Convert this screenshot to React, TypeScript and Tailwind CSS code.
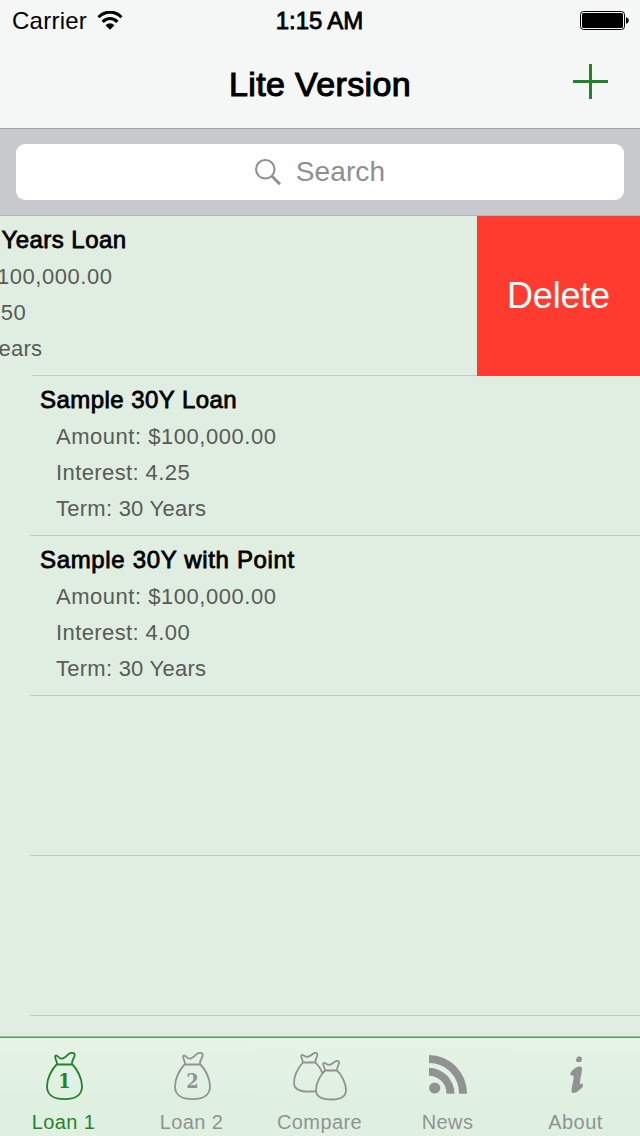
interface Loan {
  title: string;
  amount: string;
  interest: string;
  term: string;
}

const swipedLoan: Loan = {
  title: "Sample 15 Years Loan",
  amount: "$100,000.00",
  interest: "3.50",
  term: "15 Years",
};

const loans: Loan[] = [
  { title: "Sample 30Y Loan", amount: "$100,000.00", interest: "4.25", term: "30 Years" },
  { title: "Sample 30Y with Point", amount: "$100,000.00", interest: "4.00", term: "30 Years" },
];

const BAG = "M10.6 12.5 C6 17 1 26 1 34.5 C1 43 8 47.2 18.5 47.2 C29 47.2 36 43 36 34.5 C36 26 31 17 26.4 12.5 M10.8 12.5 H26.2 M11 12.5 C11.5 9.5 9 8 9.2 4.5 C9.4 2.5 11.5 3.8 12.5 5 C15.5 8.5 19.5 5.5 22.5 2.2 C24.5 0.3 28.8 0.3 28.7 3 C28.6 6 25.5 8 26 12.5";

function BagIcon({ label }: { label: string }) {
  return (
    <svg width="37" height="49" viewBox="0 0 37 49" fill="none" stroke="currentColor" strokeWidth="1.8">
      <path d={BAG} />
      <text
        x="18.5"
        y="36.3"
        textAnchor="middle"
        textLength="12.4"
        lengthAdjust="spacingAndGlyphs"
        fill="currentColor"
        stroke="none"
        className="font-['DejaVu_Serif'] text-[21px] font-bold"
      >
        {label}
      </text>
    </svg>
  );
}

function BagsIcon() {
  return (
    <svg width="54" height="49" viewBox="0 0 54 49" fill="none" stroke="currentColor" strokeWidth="1.8">
      <path d="M9.8 10.5 C6 15 1 22 1 31 C1 38 9 40 17 39.5 L23 39.3 M9.8 10.5 H22.5 M9.8 10.5 C10 8 8 6 8.3 4 C8.5 2 10.5 3.2 11.5 4 C14.5 6.5 17.5 4 20 1.8 C22 .3 24.8 .5 24.4 3 C24 6 22 7 22.6 10.5 C25 13 28 17 30 22" />
      <path d="M32 18.5 C28 22 23 31 23 38 C23 45 30 47.5 38.5 47.5 C46.5 47.5 53 45 53 38 C53 31 48 22 44 18.5 M32 18.5 H44.3 M32 18.5 C32.2 16 30 14 30.2 12 C30.4 10 32.5 11.2 33.5 12 C36.5 14.5 39 12 41.5 10 C43.5 8.5 46.4 8.5 46 11 C45.5 14 43.5 15.5 44 18.5" />
    </svg>
  );
}

function NewsIcon() {
  return (
    <svg className="-mt-[3px]" width="38" height="39" viewBox="0 0 38 39" fill="currentColor">
      <circle cx="5.7" cy="33" r="5.6" />
      <path d="M0 12.8 A26 26 0 0 1 25.5 38.8 H17.5 A17.5 17.5 0 0 0 0 20.8 Z" />
      <path d="M0 0 A38.5 38.5 0 0 1 38 38.8 H30 A30 30 0 0 0 0 8 Z" />
    </svg>
  );
}

function AboutIcon() {
  return (
    <svg className="-mt-[2px] ml-[2px]" width="14" height="38" viewBox="0 0 14 38" fill="currentColor">
      <path d="M7 1.2 L9 0.2 L11.3 1 L12 3.8 L11 6 H6.5 L6 3.5 Z" />
      <path d="M0.3 18.6 C0 16 3.5 13.2 6 11.5 C8.5 10 12 10 12 12.5 C12 16 10.5 21 9.8 27.8 C11 28.5 11.5 27 12.5 27.8 C13.5 30.5 12.5 32.3 10 33.3 C8 35.5 6 37 3.3 37 C1.5 37 1.2 35.5 1.6 33 C2.3 28 3.8 24 3.6 20 C2.6 19 1.3 20.3 .3 18.6 Z" />
    </svg>
  );
}

function StatusBar() {
  return (
    <div className="grid h-10 grid-cols-3 items-center pl-3 pr-[11px] text-[24px] leading-10">
      <div className="flex items-center gap-[10px]">
        <span className="pt-px tracking-[0.25px]">Carrier</span>
        <svg width="26" height="19" viewBox="0 0 26 19" fill="none" stroke="#000" strokeWidth="3.1">
          <path d="M1.5 6.2 C8 -.6 18 -.6 24.5 6.2" />
          <path d="M5.6 10.8 C10 6.4 16 6.4 20.4 10.8" />
          <path d="M8.5 14.3 C11.5 11.4 14.5 11.4 17.5 14.3 L13 18.7 Z" fill="#000" stroke="none" />
        </svg>
      </div>
      <span className="pt-px pr-[2px] text-center tracking-[-0.1px] [-webkit-text-stroke:0.8px_#000]">
        1:15 AM
      </span>
      <svg className="justify-self-end" width="49" height="19" viewBox="0 0 49 19">
        <rect x="0.5" y="0.5" width="44" height="18" rx="3" fill="none" stroke="#000" />
        <rect x="2" y="2" width="41" height="15" rx="1.5" />
        <path d="M46 6.2 C49.7 6.8 49.7 12.2 46 12.8 Z" />
      </svg>
    </div>
  );
}

function LoanDetails({ loan }: { loan: Loan }) {
  return (
    <div className="pl-10 pt-[6px] whitespace-nowrap">
      <h2
        className={`h-[37px] text-[24px] leading-9 text-black [-webkit-text-stroke:0.8px_#000] ${
          loan.title.endsWith("Point") ? "tracking-[0.66px]" : "tracking-[0.45px]"
        }`}
      >
        {loan.title}
      </h2>
      <div className="pl-4 text-[22px] leading-9 text-[#585b58]">
        <p className="tracking-[0.53px]">Amount: {loan.amount}</p>
        <p className="tracking-[0.4px]">Interest: {loan.interest}</p>
        <p className="tracking-[0.25px]">Term: {loan.term}</p>
      </div>
    </div>
  );
}

function Separator() {
  return <div className="mt-auto ml-[30px] h-px shrink-0 bg-[#bfcac1]" />;
}

const tabs = [
  { name: "Loan 1", icon: <BagIcon label="1" />, active: true },
  { name: "Loan 2", icon: <BagIcon label="2" />, active: false },
  { name: "Compare", icon: <BagsIcon />, active: false },
  { name: "News", icon: <NewsIcon />, active: false },
  { name: "About", icon: <AboutIcon />, active: false },
];

export default function App() {
  return (
    <div className="flex h-[1136px] w-[640px] flex-col overflow-hidden bg-[#e0eee1] font-['Liberation_Sans',Arial,sans-serif] text-black">
      <header className="h-[129px] shrink-0 border-b border-[#9da5a1] bg-[#f5f7f6]">
        <StatusBar />
        <div className="grid h-[88px] grid-cols-[80px_1fr_80px] items-center">
          <h1 className="col-start-2 text-center text-[34px] leading-[88px] tracking-[0.35px] [-webkit-text-stroke:1.1px_#000]">
            Lite Version
          </h1>
          <button className="mb-[5px] ml-[13px]" aria-label="Add loan">
            <svg width="35" height="35" viewBox="0 0 35 35" fill="#1f8428">
              <rect x="16" width="3" height="35" />
              <rect y="16" width="35" height="3" />
            </svg>
          </button>
        </div>
      </header>

      <div className="h-[87px] shrink-0 border-b border-[#b3b3b7] bg-[#c8c9cd] px-4 pt-[15px]">
        <div className="flex h-14 items-center justify-center gap-[15px] rounded-[9px] bg-white text-[#8e8e93]">
          <svg width="26" height="27" viewBox="0 0 26 27" fill="none" stroke="currentColor">
            <circle cx="10.3" cy="10.3" r="9.3" strokeWidth="2" />
            <path d="M16.8 17 L25 25.3" strokeWidth="2.8" />
          </svg>
          <span className="text-[28px] tracking-[0.1px]">Search</span>
        </div>
      </div>

      <main className="min-h-0 flex-1 overflow-hidden">
        <div className="flex h-40">
          <div className="flex w-[477px] flex-col overflow-hidden">
            <div className="-ml-[164px]">
              <LoanDetails loan={swipedLoan} />
            </div>
            <div className="mt-auto ml-8 h-px bg-[#c8c7cc]" />
          </div>
          <button className="flex-1 bg-[#ff3b30] text-[36px] tracking-[-0.2px] text-white">Delete</button>
        </div>
        {loans.map((loan) => (
          <div key={loan.title} className="flex h-40 flex-col">
            <LoanDetails loan={loan} />
            <Separator />
          </div>
        ))}
        <div className="flex h-40 flex-col">
          <Separator />
        </div>
        <div className="flex h-40 flex-col">
          <Separator />
        </div>
      </main>

      <nav className="h-[100px] shrink-0 border-t border-[#8fc097] bg-[#dff0e1]">
        <div className="flex h-full border-t border-[#5b9b68] bg-linear-to-b from-[#e6f3e7] to-[#dff0e1] to-60%">
          {tabs.map((tab) => (
            <button
              key={tab.name}
              className={`flex flex-1 flex-col items-center ${tab.active ? "text-[#1f8428]" : "text-[#929292]"}`}
            >
              <span className="flex h-[74px] items-center justify-center pt-[2px]">{tab.icon}</span>
              <span className="mr-px text-[20px] leading-5 tracking-[0.4px]">{tab.name}</span>
            </button>
          ))}
        </div>
      </nav>
    </div>
  );
}
